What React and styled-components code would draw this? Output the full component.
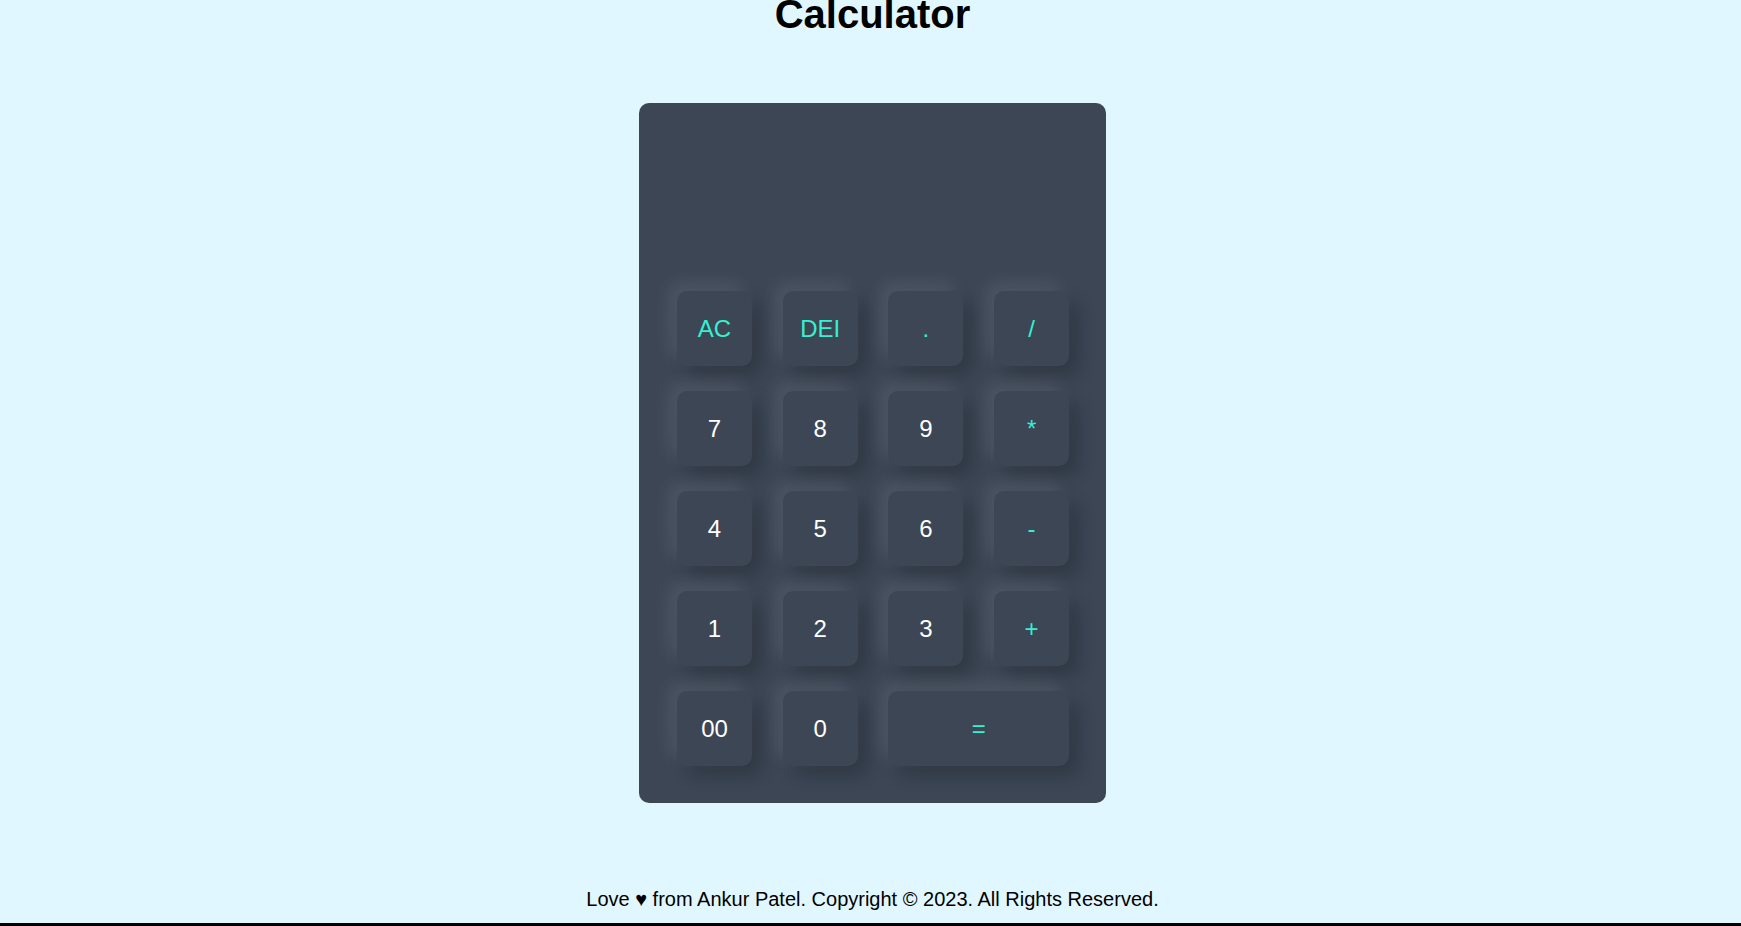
import React from 'react';
import styled, { createGlobalStyle } from 'styled-components';

const GlobalStyle = createGlobalStyle`
  html, body {
    margin: 0;
    padding: 0;
    background: #e1f7ff;
    font-family: 'Liberation Sans', Arial, sans-serif;
  }
`;

const keys = [
  { label: 'AC', op: true },
  { label: 'DEI', op: true },
  { label: '.', op: true },
  { label: '/', op: true },
  { label: '7' },
  { label: '8' },
  { label: '9' },
  { label: '*', op: true },
  { label: '4' },
  { label: '5' },
  { label: '6' },
  { label: '-', op: true },
  { label: '1' },
  { label: '2' },
  { label: '3' },
  { label: '+', op: true },
  { label: '00' },
  { label: '0' },
  { label: '=', op: true, wide: true },
];

export default function App() {
  return (
    <StyledPage>
      <GlobalStyle />
      <StyledTitle>Calculator</StyledTitle>
      <StyledCalc>
        <StyledDisplay />
        <StyledKeys>
          {keys.map((k) => (
            <StyledKey key={k.label} $op={k.op} $wide={k.wide}>
              {k.label}
            </StyledKey>
          ))}
        </StyledKeys>
      </StyledCalc>
      <StyledFooter>Love ♥ from Ankur Patel. Copyright © 2023. All Rights Reserved.</StyledFooter>
      <StyledRule />
    </StyledPage>
  );
}

const StyledPage = styled.div`
  display: flex;
  flex-direction: column;
  align-items: center;
  padding-left: 4px;
  height: 926px;
  overflow: hidden;
`;

const StyledTitle = styled.h1`
  margin: -9px 0 0;
  font-size: 40px;
  line-height: 46px;
  font-weight: bold;
  color: #000;
`;

const StyledCalc = styled.div`
  margin-top: 66px;
  width: 467px;
  box-sizing: border-box;
  padding: 37px 37px 37px 38px;
  background: #3c4655;
  border-radius: 10px;
  display: flex;
  flex-direction: column;
  gap: 25px;
`;

const StyledDisplay = styled.div`
  height: 126px;
`;

const StyledKeys = styled.div`
  display: grid;
  grid-template-columns: repeat(4, 75px);
  grid-auto-rows: 75px;
  column-gap: 30.7px;
  row-gap: 25px;
`;

const StyledKey = styled.button`
  grid-column: ${(p) => (p.$wide ? 'span 2' : 'auto')};
  border: none;
  border-radius: 10px;
  background: #3c4655;
  color: ${(p) => (p.$op ? '#35f0d2' : '#ffffff')};
  font-family: 'Liberation Sans', Arial, sans-serif;
  font-size: 24px;
  display: flex;
  align-items: center;
  justify-content: center;
  padding: 0;
  box-shadow: -8px -8px 18px rgba(255, 255, 255, 0.09), 10px 10px 18px rgba(0, 0, 0, 0.2);
`;

const StyledFooter = styled.footer`
  margin-top: 85px;
  font-size: 20px;
  line-height: 23px;
  color: #000;
`;

const StyledRule = styled.div`
  margin-top: 12px;
  align-self: stretch;
  margin-left: -4px;
  height: 4px;
  background: #000;
`;
